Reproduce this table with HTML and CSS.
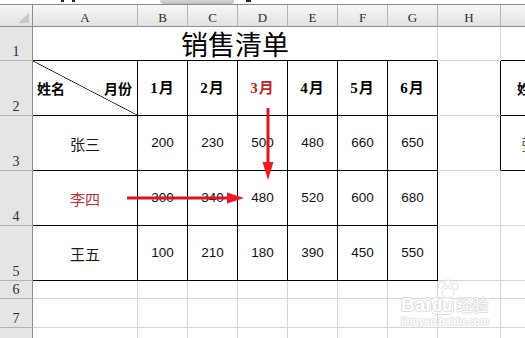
FILE: index.html
```html
<!DOCTYPE html>
<html lang="zh-CN">
<head>
<meta charset="utf-8">
<title>销售清单</title>
<link rel="stylesheet" href="styles.css">
</head>
<body>
<div class="viewport">
  <div class="formula-strip">
    <span class="frag frag-a"></span>
    <span class="frag frag-b"></span>
    <span class="frag-btn"></span>
    <span class="frag frag-c"></span>
  </div>

  <div class="sheet">
    <!-- column headers -->
    <div class="corner"></div>
    <div class="ch">A</div>
    <div class="ch">B</div>
    <div class="ch">C</div>
    <div class="ch">D</div>
    <div class="ch">E</div>
    <div class="ch">F</div>
    <div class="ch">G</div>
    <div class="ch">H</div>
    <div class="ch"></div>
    <div class="ch"></div>

    <!-- row 1 -->
    <div class="rh">1</div>
    <div class="c title">销售清单</div>
    <div class="c"></div>
    <div class="c bb"></div>
    <div class="c"></div>

    <!-- row 2 -->
    <div class="rh">2</div>
    <div class="c t diag"><span>姓名</span><span>月份</span></div>
    <div class="c t hd">1月</div>
    <div class="c t hd">2月</div>
    <div class="c t hd red">3月</div>
    <div class="c t hd">4月</div>
    <div class="c t hd">5月</div>
    <div class="c t hd">6月</div>
    <div class="c br"></div>
    <div class="c t side-hd">姓名</div>
    <div class="c"></div>

    <!-- row 3 -->
    <div class="rh">3</div>
    <div class="c t name">张三</div>
    <div class="c t num">200</div>
    <div class="c t num">230</div>
    <div class="c t num">500</div>
    <div class="c t num">480</div>
    <div class="c t num">660</div>
    <div class="c t num">650</div>
    <div class="c br"></div>
    <div class="c t side-name">张三</div>
    <div class="c"></div>

    <!-- row 4 -->
    <div class="rh">4</div>
    <div class="c t name red-name">李四</div>
    <div class="c t num">300</div>
    <div class="c t num">340</div>
    <div class="c t num">480</div>
    <div class="c t num">520</div>
    <div class="c t num">600</div>
    <div class="c t num">680</div>
    <div class="c"></div>
    <div class="c"></div>
    <div class="c"></div>

    <!-- row 5 -->
    <div class="rh">5</div>
    <div class="c t name">王五</div>
    <div class="c t num">100</div>
    <div class="c t num">210</div>
    <div class="c t num">180</div>
    <div class="c t num">390</div>
    <div class="c t num">450</div>
    <div class="c t num">550</div>
    <div class="c"></div>
    <div class="c"></div>
    <div class="c"></div>

    <!-- row 6 -->
    <div class="rh">6</div>
    <div class="c"></div><div class="c"></div><div class="c"></div><div class="c"></div><div class="c"></div>
    <div class="c"></div><div class="c"></div><div class="c"></div><div class="c"></div><div class="c"></div>

    <!-- row 7 -->
    <div class="rh">7</div>
    <div class="c"></div><div class="c"></div><div class="c"></div><div class="c"></div><div class="c"></div>
    <div class="c"></div><div class="c"></div><div class="c"></div><div class="c"></div><div class="c"></div>

    <!-- row 8 (number falls below the visible area) -->
    <div class="rh"></div>
    <div class="c"></div><div class="c"></div><div class="c"></div><div class="c"></div><div class="c"></div>
    <div class="c"></div><div class="c"></div><div class="c"></div><div class="c"></div><div class="c"></div>
  </div>

  <svg class="arrows" width="525" height="338" viewBox="0 0 525 338">
    <line x1="268" y1="108" x2="268" y2="165" stroke="#d8171d" stroke-width="3"/>
    <polygon points="262.5,162 273.5,162 268,180" fill="#ee1c22"/>
    <line x1="127" y1="198" x2="229" y2="198" stroke="#d8171d" stroke-width="3"/>
    <polygon points="227,192.5 227,203.5 244,198" fill="#ee1c22"/>
  </svg>

  <div class="watermark">
    <svg class="paw" width="30" height="20" viewBox="0 0 30 20">
      <g fill="#fff" stroke="#dadada" stroke-width="1">
        <ellipse cx="9" cy="6" rx="3" ry="3.5"/>
        <ellipse cx="16" cy="4" rx="3" ry="3.5"/>
        <ellipse cx="23" cy="7" rx="3" ry="3.5"/>
        <ellipse cx="16" cy="14" rx="6" ry="5"/>
      </g>
    </svg>
    <div class="wm-main"><span class="wm-bai">Bai</span><span class="wm-du">du</span><span class="wm-jy">经验</span></div>
    <div class="wm-url">jingyan.baidu.com</div>
  </div>
</div>
</body>
</html>
```

FILE: styles.css
```css
* {
  box-sizing: border-box;
  margin: 0;
  padding: 0;
}

html,
body {
  width: 525px;
  height: 338px;
  overflow: hidden;
  background: #ffffff;
}

body {
  font-family: "Liberation Sans", "Noto Sans CJK SC", sans-serif;
  color: #000;
}

.viewport {
  position: relative;
  width: 525px;
  height: 338px;
  overflow: hidden;
}

/* sliver of the formula bar at the top */
.formula-strip {
  height: 5px;
  border-bottom: 1px solid #8a8a8a;
  display: flex;
  align-items: flex-start;
  background: #fff;
}

.frag {
  display: inline-block;
  height: 2px;
  background: #2a2a2a;
}

.frag-a {
  width: 3px;
  margin-left: 61px;
}

.frag-b {
  width: 3px;
  margin-left: 8px;
}

.frag-btn {
  display: inline-block;
  width: 74px;
  height: 4px;
  margin-left: 85px;
  background: linear-gradient(#d6d6d6, #bdbdbd);
  border-radius: 0 0 4px 6px;
}

.frag-c {
  width: 5px;
  margin-left: 12px;
}

/* sheet grid */
.sheet {
  display: grid;
  grid-template-columns: 33px 105px 50px 50px 50px 50px 50px 50px 63px 110px 100px;
  grid-template-rows: 22px 34px 55px 55px 55px 55px 18px 29px 40px;
}

.corner {
  background:
    linear-gradient(135deg, transparent 62%, #c9c9c9 62%) right 3px bottom 3px / 14px 14px no-repeat,
    linear-gradient(#f5f5f5, #e2e2e2);
  border-right: 1px solid #8e8e8e;
  border-bottom: 1px solid #8e8e8e;
}

.ch {
  display: flex;
  align-items: flex-end;
  justify-content: center;
  padding-bottom: 2px;
  background: linear-gradient(#f8f8f8, #e1e1e1);
  border-right: 1px solid #b3b3b3;
  border-bottom: 1px solid #8e8e8e;
  font: 13px/1 "Liberation Serif", serif;
  color: #2b2b2b;
}

.rh {
  display: flex;
  align-items: flex-end;
  justify-content: center;
  padding-bottom: 1px;
  background: #e5e5e5;
  border-right: 1px solid #8e8e8e;
  border-bottom: 1px solid #b3b3b3;
  font: 14px/1 "Liberation Serif", serif;
  color: #2b2b2b;
}

.c {
  display: flex;
  align-items: center;
  justify-content: center;
  border-right: 1px solid #d6d6d6;
  border-bottom: 1px solid #d6d6d6;
  white-space: nowrap;
  overflow: hidden;
}

.t {
  border-right-color: #000;
  border-bottom-color: #000;
}

.br {
  border-right-color: #000;
}

.bb {
  border-bottom-color: #000;
}

.title {
  grid-column: span 7;
  border-bottom-color: #000;
  overflow: visible;
  font: 27px/34px "Noto Sans CJK SC", sans-serif;
  padding-top: 1px;
}

.diag {
  justify-content: space-between;
  padding: 0 5px 0 4px;
  font: bold 14px/1 "Noto Sans CJK SC", sans-serif;
  background: linear-gradient(to top right, transparent calc(50% - 0.7px), #000 50%, transparent calc(50% + 0.7px));
}

.hd {
  font: bold 15px/1 "Liberation Serif", "Noto Sans CJK SC", serif;
  letter-spacing: 1px;
}

.red {
  color: #c4232b;
}

.name {
  font: 15px/1 "Noto Sans CJK SC", sans-serif;
  color: #1a1a1a;
}

.red-name {
  color: #c0303a;
}

.num {
  font: 13.5px/1 "Liberation Sans", sans-serif;
  color: #111;
}

.side-hd {
  justify-content: flex-start;
  padding-left: 16px;
  font: bold 14px/1 "Noto Sans CJK SC", sans-serif;
}

.side-name {
  justify-content: flex-start;
  padding-left: 20px;
  font: 15px/1 "Noto Sans CJK SC", sans-serif;
  color: #555;
}

/* overlays */
.arrows {
  position: absolute;
  left: 0;
  top: 0;
  pointer-events: none;
}

.watermark {
  position: absolute;
  left: 401px;
  top: 279px;
  width: 100px;
  opacity: 0.75;
  pointer-events: none;
}

.paw {
  display: block;
  margin-left: 31px;
}

.wm-main {
  display: flex;
  align-items: baseline;
  margin-top: -4px;
  color: #fff;
  font: bold 19px/1 "Liberation Sans", "Noto Sans CJK SC", sans-serif;
  text-shadow:
    1px 0 0 #d2d2d2, -1px 0 0 #d2d2d2, 0 1px 0 #d2d2d2, 0 -1px 0 #d2d2d2;
}

.wm-du {
  margin-left: 1px;
  padding: 0 1px;
  border-radius: 4px;
  background: #fff;
  box-shadow: 0 0 0 1px #dadada;
  font-size: 16px;
}

.wm-jy {
  margin-left: 3px;
  font-size: 16px;
  font-weight: normal;
}

.wm-url {
  margin-top: 3px;
  color: #fff;
  font: bold 10px/1 "Liberation Sans", sans-serif;
  text-shadow:
    1px 0 0 #d8d8d8, -1px 0 0 #d8d8d8, 0 1px 0 #d8d8d8, 0 -1px 0 #d8d8d8;
}
```
